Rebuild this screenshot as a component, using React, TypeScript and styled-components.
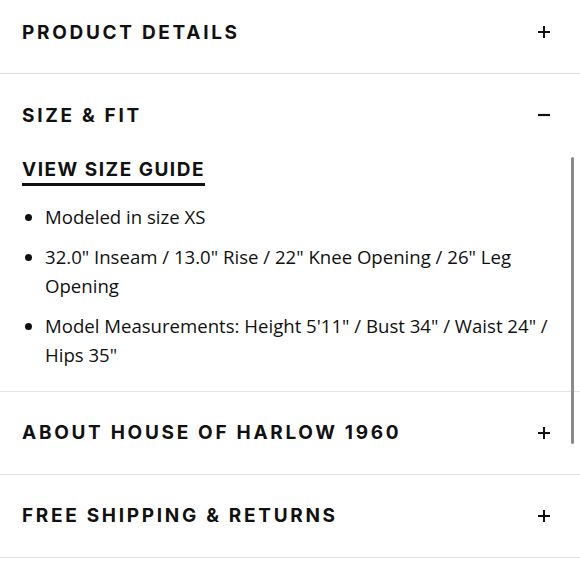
import React from "react";
import styled, { createGlobalStyle } from "styled-components";

const Global = createGlobalStyle`
  html, body { margin: 0; padding: 0; background: #fff; }
  body { font-family: "Open Sans", "Liberation Sans", sans-serif; color: #111; overflow: hidden; }
`;

const Page = styled.div`
  width: 580px;
  height: 580px;
  position: relative;
  overflow: hidden;
  background: #fff;
`;

const Section = styled.section<{ $first?: boolean }>`
  border-bottom: 1px solid #e2e2e2;
  margin-top: ${(p) => (p.$first ? "-9px" : "0")};
`;

const Header = styled.div`
  display: flex;
  align-items: center;
  justify-content: space-between;
  height: 82px;
  padding: 0 29px 0 22px;
`;

const Title = styled.h2`
  margin: 0;
  font-family: "Inter", "Liberation Sans", sans-serif;
  font-weight: 700;
  font-size: 19px;
  letter-spacing: 2.7px;
  text-transform: uppercase;
  color: #111;
`;

const Icon = styled.svg`
  width: 14px;
  height: 14px;
  display: block;
`;

const Body = styled.div`
  padding: 2px 18px 11px 22px;
`;

const GuideLink = styled.a`
  display: inline-block;
  font-family: "Inter", "Liberation Sans", sans-serif;
  font-weight: 700;
  font-size: 19px;
  letter-spacing: 1.5px;
  color: #111;
  text-decoration: none;
  border-bottom: 3px solid #111;
  padding-bottom: 1px;
  line-height: 24px;
`;

const List = styled.ul`
  margin: 16px 0 0;
  padding: 0 0 0 23px;
  list-style: disc;
`;

const Item = styled.li`
  font-size: 18.6px;
  line-height: 29.5px;
  margin-bottom: 10px;
  &::marker { font-size: 19px; }
`;

const Scrollbar = styled.div`
  position: absolute;
  right: 6px;
  top: 157px;
  width: 3px;
  height: 287px;
  border-radius: 2px;
  background: #8a8a8a;
`;

const Plus = () => (
  <Icon viewBox="0 0 14 14">
    <path d="M7 1v12M1 7h12" stroke="#111" strokeWidth="2" />
  </Icon>
);
const Minus = () => (
  <Icon viewBox="0 0 14 14">
    <path d="M1 7h12" stroke="#111" strokeWidth="2.2" />
  </Icon>
);

export default function App() {
  return (
    <Page>
      <Global />
      <Section $first>
        <Header>
          <Title>Product Details</Title>
          <Plus />
        </Header>
      </Section>
      <Section>
        <Header>
          <Title>Size &amp; Fit</Title>
          <Minus />
        </Header>
        <Body>
          <GuideLink href="#">VIEW SIZE GUIDE</GuideLink>
          <List>
            <Item>Modeled in size XS</Item>
            <Item>32.0" Inseam / 13.0" Rise / 22" Knee Opening / 26" Leg Opening</Item>
            <Item>Model Measurements: Height 5'11" / Bust 34" / Waist 24" / Hips 35"</Item>
          </List>
        </Body>
      </Section>
      <Section>
        <Header>
          <Title>About House of Harlow 1960</Title>
          <Plus />
        </Header>
      </Section>
      <Section>
        <Header>
          <Title>Free Shipping &amp; Returns</Title>
          <Plus />
        </Header>
      </Section>
      <Scrollbar />
    </Page>
  );
}
